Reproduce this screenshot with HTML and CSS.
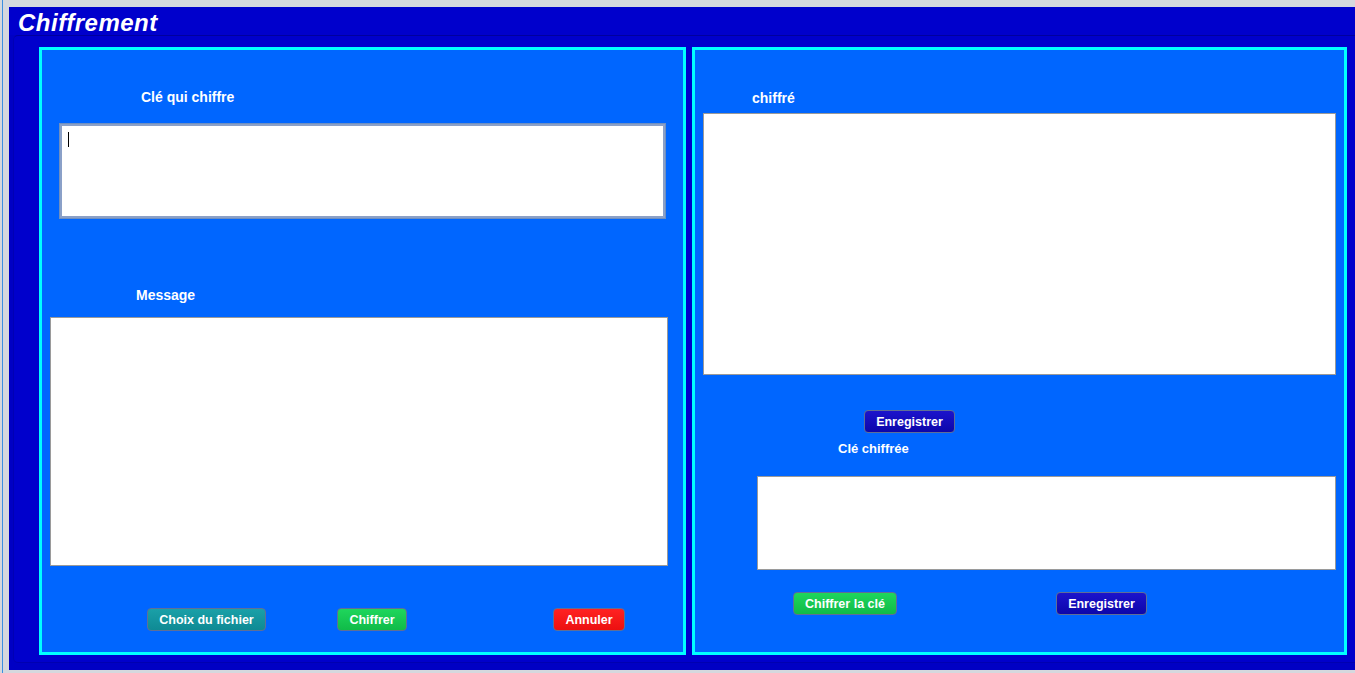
FILE: index.html
```html
<!DOCTYPE html>
<html lang="fr">
<head>
<meta charset="utf-8">
<title>Chiffrement</title>
<link rel="stylesheet" href="styles.css">
</head>
<body>
<div class="desk">
  <div class="edge"></div>
  <div class="frame">
    <div class="titlebar">Chiffrement</div>
    <div class="content">
      <section class="panel panel-left">
        <div class="label l-cle">Clé qui chiffre</div>
        <div class="field f-cle focused"><span class="caret"></span></div>
        <div class="label l-msg">Message</div>
        <div class="field f-msg"></div>
        <div class="btnrow row-left">
          <button class="btn teal b-choix">Choix du fichier</button>
          <button class="btn green b-chiffrer">Chiffrer</button>
          <button class="btn red b-annuler">Annuler</button>
        </div>
      </section>
      <section class="panel panel-right">
        <div class="label l-chiffre">chiffré</div>
        <div class="field f-chiffre"></div>
        <button class="btn navy b-enreg1">Enregistrer</button>
        <div class="label small l-clech">Clé chiffrée</div>
        <div class="field f-clech"></div>
        <div class="btnrow row-right">
          <button class="btn green b-chcle">Chiffrer la clé</button>
          <button class="btn navy b-enreg2">Enregistrer</button>
        </div>
      </section>
    </div>
  </div>
</div>
</body>
</html>
```
FILE: styles.css
```css
html, body {
  margin: 0;
  padding: 0;
  background: #d5d8de;
  width: 1355px;
  height: 673px;
  overflow: hidden;
  font-family: "Liberation Sans", Arial, sans-serif;
}
.desk {
  display: flex;
  height: 673px;
}
.edge {
  width: 9px;
  flex: none;
  box-sizing: border-box;
  border-left: 2px solid #d5d8de;
  background: linear-gradient(to right, #3d8fe0 0, #3d8fe0 1px, #d5d8de 1px);
}
.frame {
  margin-top: 7px;
  width: 1346px;
  height: 663px;
  background: #0000c4;
  display: flex;
  flex-direction: column;
}
.titlebar {
  height: 28px;
  flex: none;
  box-sizing: border-box;
  padding-left: 9px;
  padding-top: 3px;
  color: #fff;
  font-family: "Liberation Sans", Arial, sans-serif;
  font-weight: bold;
  font-style: italic;
  font-size: 24px;
  line-height: 26px;
  letter-spacing: 0.5px;
  background: #0000cc;
}
.content {
  flex: 1;
  margin-left: 4px;
  margin-bottom: 7px;
  background: #0000cc;
  border-top: 1px solid #00009e;
  border-left: 1px solid #0000b4;
  border-bottom: 1px solid #0000b0;
  border-top-left-radius: 5px;
  border-bottom-left-radius: 5px;
  box-sizing: border-box;
  padding: 11px 0 6px 25px;
  display: flex;
  gap: 6px;
}
.panel {
  background: #0066ff;
  border: 3px solid #00ffff;
  box-sizing: border-box;
  height: 608px;
  padding-top: 1px;
}
.panel-left { width: 647px; }
.panel-right { width: 655px; }

.label {
  color: #fff;
  font-weight: bold;
  font-size: 14px;
  line-height: 16px;
  height: 16px;
}
.label.small { font-size: 13px; }

.field {
  background: #fff;
  border: 1px solid #9a9a9a;
  box-sizing: border-box;
  position: relative;
}
.field.focused { border: 2px solid #8aa0c8; outline: 1px solid #6f8fc0; }
.caret {
  position: absolute;
  left: 6px;
  top: 6px;
  width: 1px;
  height: 15px;
  background: #000;
}

.l-cle { margin: 38px 0 0 99px; }
.f-cle { margin: 19px 0 0 18px; width: 605px; height: 94px; }
.l-msg { margin: 69px 0 0 94px; }
.f-msg { margin: 14px 0 0 8px; width: 618px; height: 249px; }
.row-left { margin-top: 42px; }

.l-chiffre { margin: 39px 0 0 57px; }
.f-chiffre { margin: 7px 0 0 8px; width: 633px; height: 262px; }
.b-enreg1 { margin: 35px 0 0 169px; width: 91px; display: block; }
.l-clech { margin: 8px 0 0 143px; }
.f-clech { margin: 19px 0 0 62px; width: 579px; height: 94px; }
.row-right { margin-top: 22px; }

.btnrow { display: flex; height: 23px; }

.btn {
  height: 23px;
  box-sizing: border-box;
  border: 1px solid #5f6f96;
  border-radius: 4px;
  color: #fff;
  font-family: "Liberation Sans", Arial, sans-serif;
  font-weight: bold;
  font-size: 12.5px;
  padding: 0;
  line-height: 20px;
  text-align: center;
}
.teal { background: linear-gradient(#1aa0a8, #0f8a94); }
.green { background: linear-gradient(#1fd65c, #10bb48); }
.red { background: linear-gradient(#ff2222, #ec1010); }
.navy { background: linear-gradient(#1c14cc, #0c06aa); }

.b-choix { margin-left: 105px; width: 119px; }
.b-chiffrer { margin-left: 71px; width: 70px; }
.b-annuler { margin-left: 146px; width: 72px; }

.b-chcle { margin-left: 98px; width: 104px; }
.b-enreg2 { margin-left: 159px; width: 91px; }
```
